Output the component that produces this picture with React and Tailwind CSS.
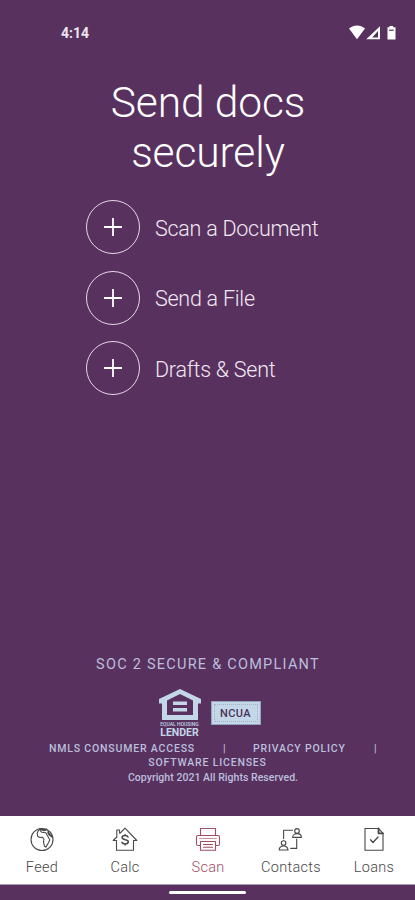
import React from 'react';

const actions = ['Scan a Document', 'Send a File', 'Drafts & Sent'];

const Svg = ({ children, className = '' }) => (
  <svg
    viewBox="0 0 26 26"
    className={`h-[26px] w-[26px] ${className}`}
    fill="none"
    stroke="currentColor"
    strokeWidth="1.1"
    strokeLinejoin="round"
    strokeLinecap="round"
  >
    {children}
  </svg>
);

const GlobeIcon = () => (
  <Svg>
    <circle cx="13" cy="13.5" r="11" />
    <path d="M9.5 4.2 8.2 7.2l.4 3 2.4 1.3 2.6-.2 1.3 2.2-.4 2.5 1 4.3 1.4.8 2.7-4.6 1.2-2.8-2.6-4.4-1.4-2.5-4.2-.6-1.8-2" />
    <path d="M11 3l4 1.2 2.5-.6M19.3 6l.5 2 3 2.5" strokeWidth="2" />
  </Svg>
);

const HouseIcon = () => (
  <Svg>
    <path d="M4.5 14.5H1.2L4.8 11V4h2.8v3.2l1.6-1L13 2.2l11.8 12.3h-3.3v9.7h-17z" />
    <path d="M16 11c-.4-1-1.4-1.5-2.9-1.5-1.8 0-3 .8-3 2.1 0 3 6.2 1.3 6.2 4.2 0 1.4-1.3 2.2-3.2 2.2-1.6 0-2.8-.6-3.2-1.6" strokeWidth="1.5" />
    <path d="M13.1 8.2v1.3M13.1 18v1.3" />
  </Svg>
);

const PrinterIcon = () => (
  <Svg>
    <path d="M5.5 9.5v-7h15v7" />
    <path d="M5.5 19.5H3a1.5 1.5 0 0 1-1.5-1.5v-7A1.5 1.5 0 0 1 3 9.5h20a1.5 1.5 0 0 1 1.5 1.5v7a1.5 1.5 0 0 1-1.5 1.5h-2.5" />
    <path d="M5.5 15.5h15v8.7h-15zM8.5 18.5h9M8.5 21.2h9" />
    <path d="M4.5 12.5h17" strokeOpacity=".6" />
  </Svg>
);

const ContactsIcon = () => (
  <Svg>
    <path d="M5.6 12.5V4.2h9M18.7 13v9.4h-6" />
    <circle cx="19" cy="4.9" r="2.3" />
    <path d="M14.6 11.4c0-5 8.8-5 8.8 0z" />
    <circle cx="5.6" cy="17" r="2.3" />
    <path d="M1.2 24c0-5.4 8.8-5.4 8.8 0z" />
  </Svg>
);

const LoansIcon = () => (
  <Svg>
    <path d="M4 2.5h13.5l4.5 4.8v16.9H4z" />
    <path d="M17.5 2.5v4.8H22" strokeWidth="1.8" />
    <path d="m9.5 13.8 2.5 2.7 5-5.5" strokeWidth="1.3" />
  </Svg>
);

const tabs = [
  { label: 'Feed', Icon: GlobeIcon },
  { label: 'Calc', Icon: HouseIcon },
  { label: 'Scan', Icon: PrinterIcon, active: true },
  { label: 'Contacts', Icon: ContactsIcon },
  { label: 'Loans', Icon: LoansIcon },
];

const StatusBar = () => (
  <div className="flex h-[66px] items-center justify-between pl-[61px] pr-[17px] text-white">
    <span className="text-[14px] font-bold leading-none text-[#ece4ed]">4:14</span>
    <svg viewBox="0 0 50 16" className="h-4 w-[50px]" fill="white">
      <path d="M1 3.5C6-.5 12-.5 17 3.5L9 14.3z" />
      <path fillRule="evenodd" d="M32 1.2v13H18.2zM30 6l-5.8 6.4H30z" />
      <path d="M39.5 2.2h2V1h3.6v1.2h2.4v12.3h-8z" />
      <path d="M41 4.6h4.8v1.2H41z" fill="#59315f" />
    </svg>
  </div>
);

/* Equal housing lender mark and the NCUA plate */
const Badges = () => (
  <div className="flex h-12 items-start justify-center gap-[11px] pl-[5px] text-[#c4d7e8]">
    <div className="flex w-10 flex-col items-center">
      <svg viewBox="0 0 42 32" className="h-8 w-[42px]" fill="currentColor">
        <path fillRule="evenodd" d="M21 0 42 10v4.5h-3V31H3V14.5H0V10zM21 5 8 11.5V26h26V11.5z" />
        <path d="M14 12.5h14V16H14zM14 19h14v3.5H14z" />
      </svg>
      <span className="whitespace-nowrap text-[5px] font-medium leading-[6px]">EQUAL HOUSING</span>
      <span className="mt-px text-[10.5px] font-bold leading-[9px]">LENDER</span>
    </div>
    <div className="mt-3 flex h-6 w-[50px] items-center justify-center border border-[#93a5b8] bg-[#c4d7e8] p-[2px]">
      <div className="flex h-full w-full items-center justify-center border border-dotted border-[#a3b1c4]">
        <span className="text-[11px] font-medium leading-none tracking-[0.4px] text-[#4a3159]">NCUA</span>
      </div>
    </div>
  </div>
);

const App = () => (
  <div className="flex h-[900px] w-[415px] flex-col overflow-hidden bg-[#59315f] font-['Roboto',sans-serif]">
    <StatusBar />

    <h1 className="mt-3 pl-px text-center text-[42.5px] font-light leading-[50px] tracking-[-0.1px] text-white">
      Send docs
      <br />
      securely
    </h1>

    <div className="mt-[22px] flex flex-col gap-[16.5px] pl-[86px]">
      {actions.map((label) => (
        <button key={label} className="flex items-center gap-[15px] text-left">
          <span className="flex h-[54px] w-[54px] items-center justify-center rounded-full border border-[#e6d8e8]">
            <svg viewBox="0 0 18 18" className="h-[18px] w-[18px]" stroke="white" strokeWidth="1.8">
              <path d="M9 0v18M0 9h18" />
            </svg>
          </span>
          <span className="mt-[3px] text-[21.5px] font-light leading-6 tracking-[-0.25px] text-[#f0e8f2]">{label}</span>
        </button>
      ))}
    </div>

    <footer className="mt-auto flex h-[160px] flex-col text-center text-[#b9bfdc]">
      <p className="pl-px text-[14.5px] leading-[18px] tracking-[1.25px]">SOC 2 SECURE &amp; COMPLIANT</p>
      <div className="mt-[15px]">
        <Badges />
      </div>
      <div className="mt-[4px] flex whitespace-nowrap pl-[49px] text-[10.5px] font-medium leading-[15px] tracking-[0.82px]">
        <span className="w-[174px] text-left">NMLS CONSUMER ACCESS</span>
        <span className="w-[30px] text-left">|</span>
        <span className="w-[121px] text-left">PRIVACY POLICY</span>
        <span>|</span>
      </div>
      <p className="text-[10.5px] font-medium leading-[14px] tracking-[0.82px]">SOFTWARE LICENSES</p>
      <p className="pl-[11px] text-[10.5px] font-medium leading-[16px] tracking-[0.04px]">
        Copyright 2021 All Rights Reserved.
      </p>
    </footer>

    <nav className="grid h-[69px] shrink-0 grid-cols-5 border-b border-[#aaa0ad] bg-white pt-[10px]">
      {tabs.map(({ label, Icon, active }) => (
        <div key={label} className={`flex flex-col items-center pl-px ${active ? 'text-[#a04e60]' : 'text-[#484848]'}`}>
          <Icon />
          <span className="mt-[7px] text-[14.5px] font-light leading-[18px] tracking-[0.3px]">{label}</span>
        </div>
      ))}
    </nav>
    <div className="flex h-[15px] shrink-0 justify-center pt-[6px]">
      <div className="h-[3px] w-[77px] rounded-full bg-white" />
    </div>
  </div>
);

export default App;
